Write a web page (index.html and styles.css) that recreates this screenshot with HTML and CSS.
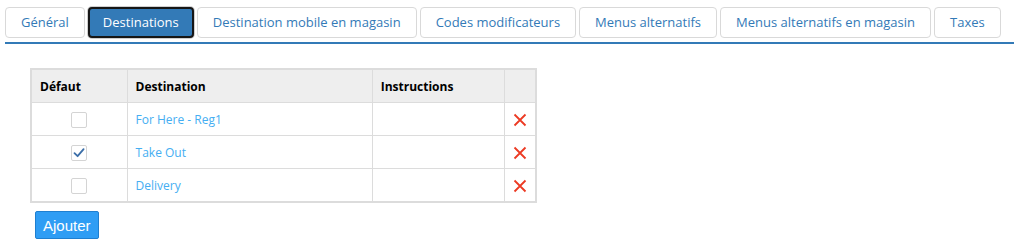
FILE: index.html
```html
<!DOCTYPE html>
<html lang="fr">
<head>
  <meta charset="UTF-8" />
  <title>Destinations</title>
  <link rel="stylesheet" href="styles.css">
</head>
<body>
  <div class="page">
    <!-- Onglets -->
    <ul class="tabs">
      <li class="tab">Général</li>
      <li class="tab active">Destinations</li>
      <li class="tab">Destination mobile en magasin</li>
      <li class="tab">Codes modificateurs</li>
      <li class="tab">Menus alternatifs</li>
      <li class="tab">Menus alternatifs en magasin</li>
      <li class="tab">Taxes</li>
    </ul>

    <div class="panel">
      <table class="dest-table">
        <thead>
          <tr>
            <th class="col-default">Défaut</th>
            <th class="col-dest">Destination</th>
            <th class="col-instr">Instructions</th>
            <th class="col-del"></th>
          </tr>
        </thead>
        <tbody>
          <tr>
            <td class="cell-check"><span class="check"></span></td>
            <td><a class="dest-link">For Here - Reg1</a></td>
            <td></td>
            <td class="cell-del">
              <svg class="del" viewBox="0 0 14 14" width="14" height="14"><path d="M1.5 1.5 L12.5 12.5 M12.5 1.5 L1.5 12.5" stroke="#ec3a23" stroke-width="1.8"/></svg>
            </td>
          </tr>
          <tr>
            <td class="cell-check">
              <span class="check">
                <svg viewBox="0 0 16 16" width="16" height="16"><path d="M3.5 8.2 L6.6 11.2 L12.6 4.2" fill="none" stroke="#3b6ea8" stroke-width="1.8" stroke-linecap="round" stroke-linejoin="round"/></svg>
              </span>
            </td>
            <td><a class="dest-link">Take Out</a></td>
            <td></td>
            <td class="cell-del">
              <svg class="del" viewBox="0 0 14 14" width="14" height="14"><path d="M1.5 1.5 L12.5 12.5 M12.5 1.5 L1.5 12.5" stroke="#ec3a23" stroke-width="1.8"/></svg>
            </td>
          </tr>
          <tr>
            <td class="cell-check"><span class="check"></span></td>
            <td><a class="dest-link">Delivery</a></td>
            <td></td>
            <td class="cell-del">
              <svg class="del" viewBox="0 0 14 14" width="14" height="14"><path d="M1.5 1.5 L12.5 12.5 M12.5 1.5 L1.5 12.5" stroke="#ec3a23" stroke-width="1.8"/></svg>
            </td>
          </tr>
        </tbody>
      </table>

      <button class="btn-add">Ajouter</button>
    </div>
  </div>
</body>
</html>
```

FILE: styles.css
```css
html, body {
  margin: 0;
  padding: 0;
  background: #fff;
  font-family: 'Open Sans', sans-serif;
}

.page {
  padding: 7px 0 0 5px;
}

.tabs {
  display: flex;
  gap: 3px;
  list-style: none;
  margin: 0;
  padding: 0 0 4px 0;
  border-bottom: 2px solid #337ab7;
}

.tab {
  height: 29px;
  line-height: 29px;
  padding: 0 15px;
  border: 1px solid #d9d9d9;
  border-radius: 4px;
  color: #337ab7;
  font-size: 13px;
  white-space: nowrap;
}

.tab.active {
  background: #337ab7;
  color: #fff;
  border: 2px solid #161616;
  height: 27px;
  line-height: 27px;
  padding: 0 13px;
  box-shadow: 0 0 0 1px #cfcfcf;
}

.panel {
  padding: 24px 0 0 25px;
}

.dest-table {
  border-collapse: collapse;
  border: 2px solid #dcdcdc;
  width: 507px;
  font-size: 12px;
}

.dest-table th,
.dest-table td {
  border: 1px solid #dcdcdc;
  height: 32px;
  padding: 0 8px;
  text-align: left;
}

.dest-table th {
  background: #eeeeee;
  color: #000;
  font-weight: 700;
}

.col-default { width: 79px; }
.col-dest { width: 230px; }
.col-instr { width: 116px; }
.col-del { width: 14px; }

.cell-check {
  text-align: center !important;
}

.check {
  display: inline-block;
  width: 14px;
  height: 14px;
  border: 1px solid #d4d4d4;
  border-radius: 2px;
  vertical-align: middle;
  background: #fff;
}

.check svg {
  display: block;
  margin: -1px 0 0 -1px;
}

.dest-link {
  color: #45aef2;
  cursor: pointer;
}

.cell-del {
  text-align: center !important;
  padding: 0 !important;
}

.del {
  display: inline-block;
  vertical-align: middle;
}

.btn-add {
  margin: 8px 0 0 5px;
  height: 28px;
  padding: 0 7px;
  background: #2f9df4;
  border: 1px solid #1f7fd0;
  border-radius: 2px;
  color: #fff;
  font-family: 'Liberation Sans', sans-serif;
  font-size: 15px;
}
```
